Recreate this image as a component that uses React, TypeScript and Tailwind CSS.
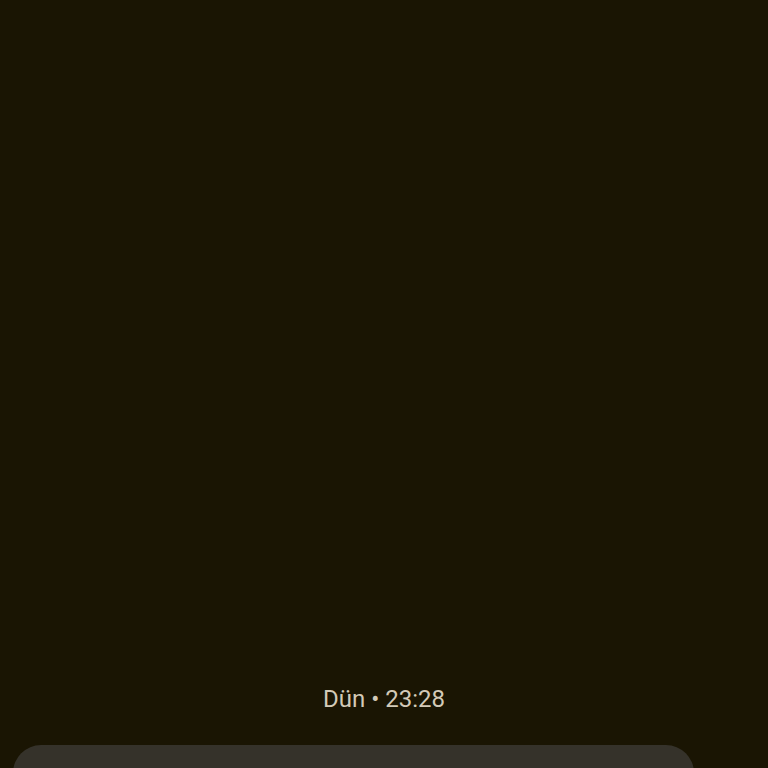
export default function App() {
  return (
    <div
      className="h-screen w-full overflow-hidden bg-[#1a1503] flex flex-col"
      style={{ fontFamily: 'Roboto, "Noto Sans", sans-serif' }}
    >
      {/* Message area */}
      <div className="flex-1" />

      {/* Timestamp */}
      <div className="flex justify-center pb-[32px]">
        <span className="text-[24px] leading-[28px] text-[#d3cab8]">Dün • 23:28</span>
      </div>

      {/* Composer */}
      <div className="flex items-start gap-2 pl-[13px] pr-[74px] h-[23px]">
        <div className="flex-1 h-[56px] shrink-0 rounded-[28px] bg-[#35322a]" />
      </div>
    </div>
  );
}
